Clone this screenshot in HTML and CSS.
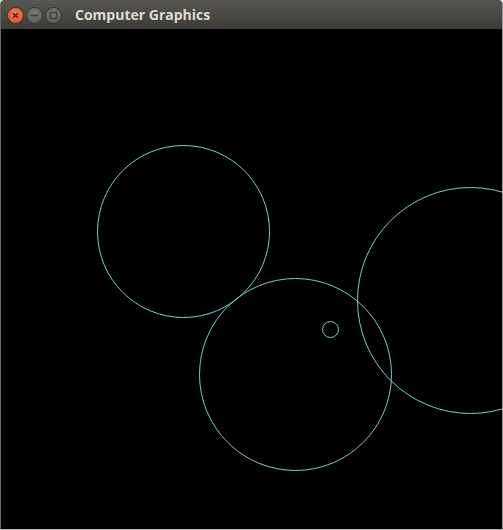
FILE: index.html
```html
<!DOCTYPE html>
<html>
<head>
<meta charset="utf-8">
<link rel="stylesheet" href="styles.css">
</head>
<body>
<div class="window">
  <div class="titlebar">
    <div class="controls">
      <span class="btn close"><svg width="15" height="15" viewBox="0 0 15 15"><path d="M5.2 5.2 L9.8 9.8 M9.8 5.2 L5.2 9.8" stroke="#4a1a0c" stroke-width="1.4" fill="none"/></svg></span>
      <span class="btn"><svg width="15" height="15" viewBox="0 0 15 15"><path d="M4 7.5 H11" stroke="#3a3935" stroke-width="1.6" fill="none"/></svg></span>
      <span class="btn"><svg width="15" height="15" viewBox="0 0 15 15"><rect x="4.5" y="4.5" width="6" height="6" stroke="#3a3935" stroke-width="1.3" fill="none"/></svg></span>
    </div>
    <div class="title">Computer Graphics</div>
  </div>
  <div class="canvas">
    <svg class="drawing" width="501" height="500" viewBox="1 29 501 500">
      <g fill="none" stroke="#7fc9c9" stroke-width="1">
        <circle cx="183.5" cy="231.5" r="86"/>
        <circle cx="295.5" cy="374.5" r="96"/>
        <circle cx="470.5" cy="300.5" r="113"/>
        <circle cx="330.5" cy="329.5" r="8"/>
      </g>
    </svg>
  </div>
</div>
</body>
</html>
```
FILE: styles.css
```css
html, body {
  margin: 0;
  padding: 0;
  background: #dcdcdc;
}
.window {
  width: 503px;
  height: 530px;
  display: flex;
  flex-direction: column;
  background: #000;
  box-sizing: border-box;
  border-left: 1px solid #6a6a6a;
  border-right: 1px solid #9a9a9a;
  border-bottom: 1px solid #b0b0b0;
  border-radius: 5px 5px 0 0;
  overflow: hidden;
}
.titlebar {
  height: 29px;
  flex: none;
  display: flex;
  align-items: center;
  background: linear-gradient(#575650, #3c3b37);
  padding-left: 7px;
}
.controls {
  display: flex;
  gap: 4px;
  margin-top: 2px;
}
.btn {
  width: 15px;
  height: 15px;
  border-radius: 50%;
  background: radial-gradient(circle at 50% 35%, #7a7974, #55544f);
  box-shadow: 0 0 0 1px #34332f;
  display: flex;
}
.btn.close {
  background: radial-gradient(circle at 50% 35%, #f47b4f, #df4a1e);
  box-shadow: 0 0 0 1px #5a2a1a;
}
.title {
  margin-left: 14px;
  font-family: "Open Sans", "DejaVu Sans", sans-serif;
  font-weight: bold;
  font-size: 14px;
  color: #dfdbd2;
  line-height: 1;
  margin-top: 1px;
}
.canvas {
  flex: 1;
  display: flex;
}
.drawing {
  display: block;
}
```
